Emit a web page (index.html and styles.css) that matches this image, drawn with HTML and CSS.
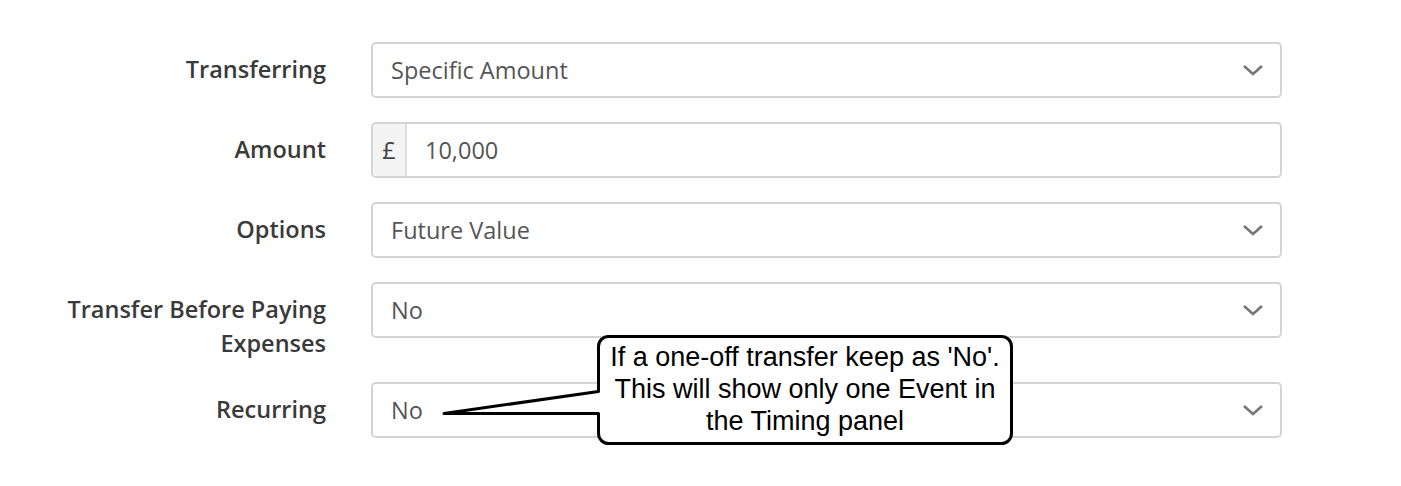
FILE: index.html
```html
<!DOCTYPE html>
<html lang="en">

<head>
  <meta charset="UTF-8">
  <meta name="viewport" content="width=device-width, initial-scale=1.0">
  <title>Transfer</title>

  <link rel="stylesheet" href="styles.css">
</head>

<body>
  <div class="form">
    <div class="row">
      <label class="label">Transferring</label>
      <div class="field select">
        <span class="value">Specific Amount</span>
        <svg class="chevron" width="22" height="14" viewBox="0 0 22 14"><path d="M2 3 L11 11 L20 3" fill="none" stroke="#777" stroke-width="2.6"/></svg>
      </div>
    </div>
    <div class="row">
      <label class="label">Amount</label>
      <div class="field">
        <span class="prefix">£</span>
        <span class="value">10,000</span>
      </div>
    </div>
    <div class="row">
      <label class="label">Options</label>
      <div class="field select">
        <span class="value">Future Value</span>
        <svg class="chevron" width="22" height="14" viewBox="0 0 22 14"><path d="M2 3 L11 11 L20 3" fill="none" stroke="#777" stroke-width="2.6"/></svg>
      </div>
    </div>
    <div class="row">
      <label class="label">Transfer Before Paying Expenses</label>
      <div class="field select">
        <span class="value">No</span>
        <svg class="chevron" width="22" height="14" viewBox="0 0 22 14"><path d="M2 3 L11 11 L20 3" fill="none" stroke="#777" stroke-width="2.6"/></svg>
      </div>
    </div>
    <div class="row">
      <label class="label">Recurring</label>
      <div class="field select">
        <span class="value">No</span>
        <svg class="chevron" width="22" height="14" viewBox="0 0 22 14"><path d="M2 3 L11 11 L20 3" fill="none" stroke="#777" stroke-width="2.6"/></svg>
      </div>
    </div>
  </div>

  <!-- note callout laid over the form -->
  <div class="callout">
    <svg class="callout-shape" width="1401" height="486" viewBox="0 0 1401 486">
      <path d="M608.5 336.5 H1001.5 A10 10 0 0 1 1011.5 346.5 V433.5 A10 10 0 0 1 1001.5 443.5 H608.5 A10 10 0 0 1 598.5 433.5 V413.5 L444 413.5 L598.5 391.5 V346.5 A10 10 0 0 1 608.5 336.5 Z" fill="#fff" stroke="#000" stroke-width="3" stroke-linejoin="round"/>
    </svg>
    <p class="callout-text">If a one-off transfer keep as 'No'.<br>This will show only one Event in<br>the Timing panel</p>
  </div>
</body>

</html>
```

FILE: styles.css
```css
* {
  margin: 0;
  padding: 0;
  box-sizing: border-box;
}

body {
  width: 1401px;
  height: 486px;
  background: #fff;
  font-family: "Open Sans", sans-serif;
  position: relative;
  overflow: hidden;
}

.form {
  padding-top: 42px;
  display: flex;
  flex-direction: column;
  gap: 24px;
}

.row {
  display: grid;
  grid-template-columns: 326px 911px;
  column-gap: 45px;
  align-items: start;
}

.label {
  text-align: right;
  font-size: 23.5px;
  font-weight: 600;
  line-height: 34px;
  color: #3a3a3a;
  padding-top: 10px;
  padding-left: 40px;
  margin-bottom: -2px;
}

.field {
  height: 56px;
  border: 2px solid #d4d4d4;
  border-radius: 5px;
  display: flex;
  align-items: center;
  overflow: hidden;
}

.select {
  padding: 0 16px 0 18px;
  justify-content: space-between;
}

.value {
  font-size: 23.5px;
  color: #555;
}

.prefix {
  width: 34px;
  height: 100%;
  background: #f4f4f4;
  border-right: 2px solid #ddd;
  display: flex;
  align-items: center;
  justify-content: center;
  font-size: 23.5px;
  color: #444;
  margin-right: 18px;
}

.callout {
  position: absolute;
  left: 0;
  top: 0;
  width: 1401px;
  height: 486px;
  pointer-events: none;
}

.callout-shape {
  position: absolute;
  left: 0;
  top: 0;
}

.callout-text {
  position: absolute;
  left: 600px;
  top: 341px;
  width: 410px;
  text-align: center;
  font-family: "Liberation Sans", Arial, sans-serif;
  font-size: 27px;
  line-height: 32px;
  color: #000;
}
```
